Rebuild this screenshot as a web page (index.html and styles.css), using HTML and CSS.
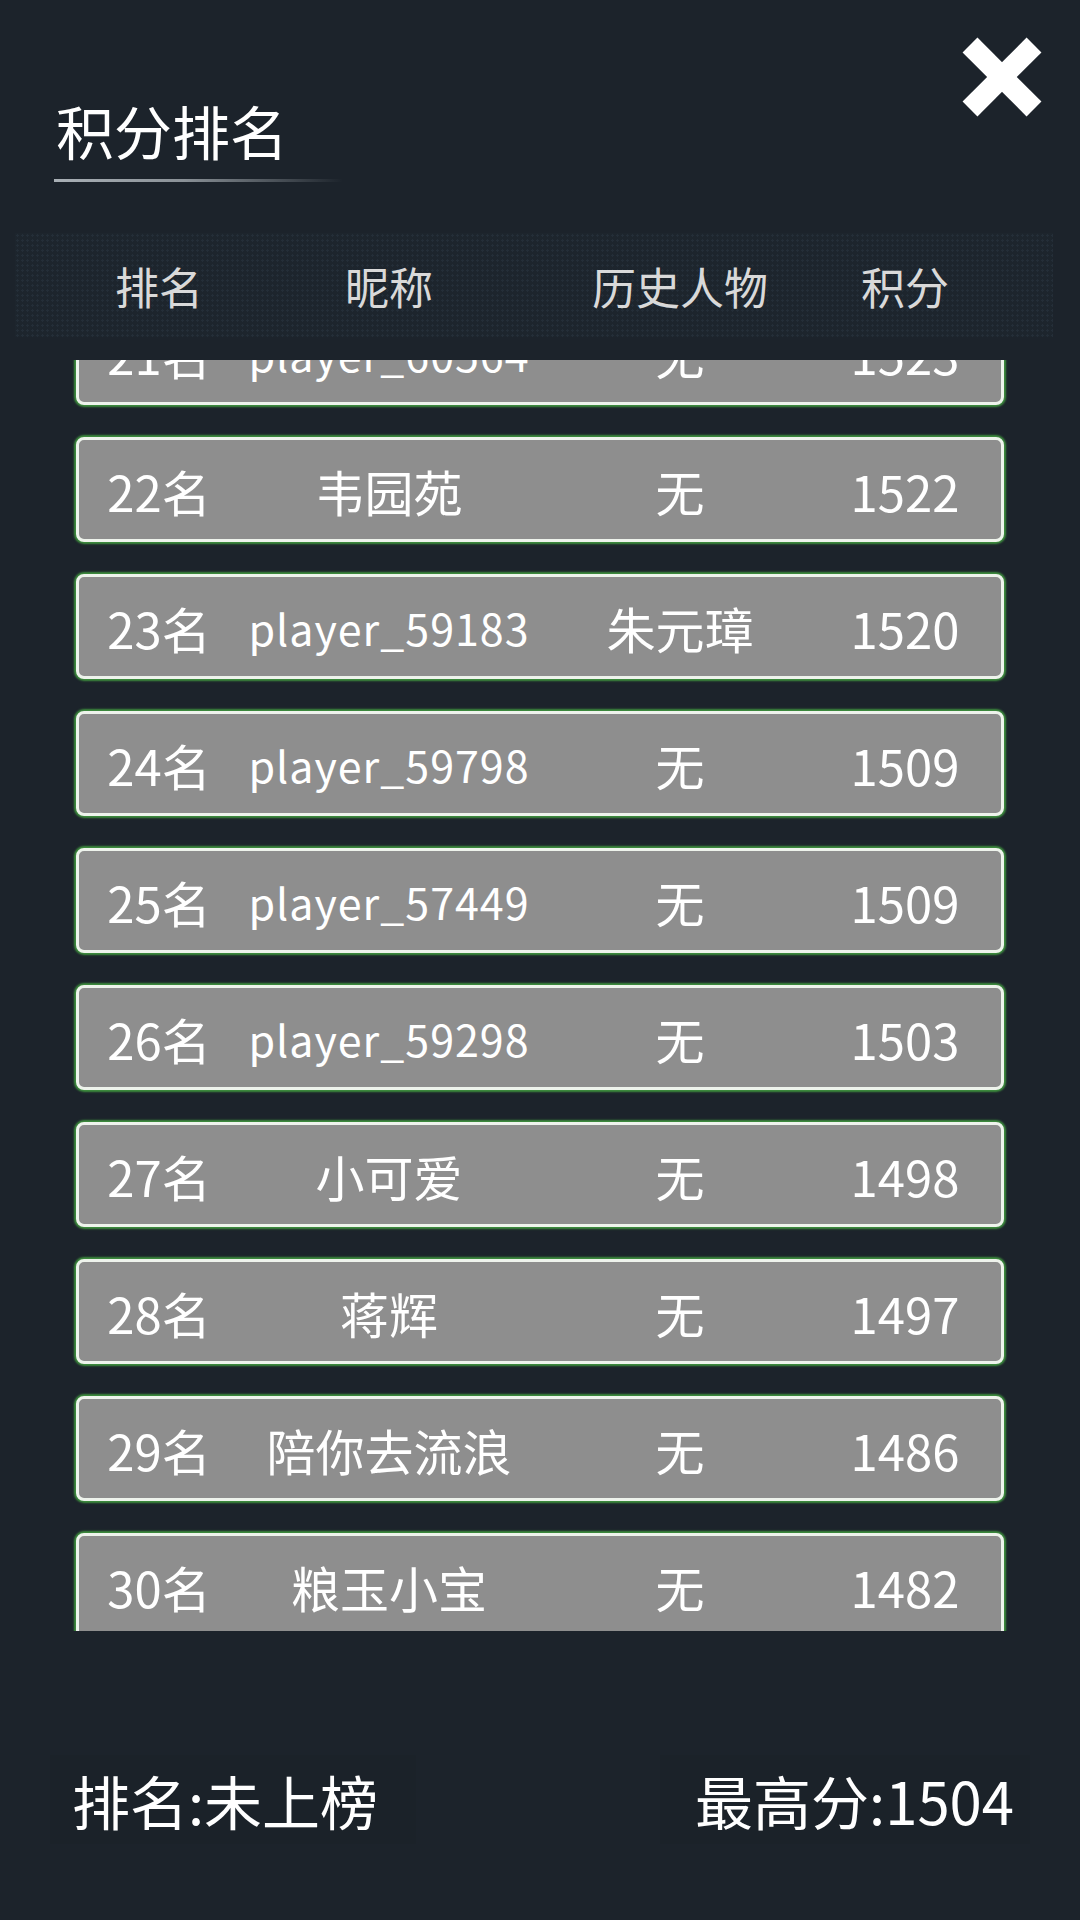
FILE: index.html
```html
<!DOCTYPE html>
<html lang="zh-CN">
<head>
<meta charset="utf-8">
<title>积分排名</title>
<link rel="stylesheet" href="styles.css">
</head>
<body>
<div class="page">
  <div class="top">
    <div class="title-wrap">
      <div class="title">积分排名</div>
      <div class="underline"></div>
    </div>
    <div class="close">
      <svg width="84" height="84" viewBox="0 0 84 84">
        <line x1="10" y1="10" x2="74" y2="74" stroke="#ffffff" stroke-width="21"/>
        <line x1="74" y1="10" x2="10" y2="74" stroke="#ffffff" stroke-width="21"/>
      </svg>
    </div>
  </div>

  <div class="header">
    <div class="hcell">排名</div>
    <div class="hcell">昵称</div>
    <div class="hcell">历史人物</div>
    <div class="hcell">积分</div>
  </div>

  <div class="list-wrap">
    <div class="list">
      <div class="row"><span>21名</span><span class="nick">player_60564</span><span>无</span><span>1523</span></div>
      <div class="row"><span>22名</span><span>韦园苑</span><span>无</span><span>1522</span></div>
      <div class="row"><span>23名</span><span class="nick">player_59183</span><span>朱元璋</span><span>1520</span></div>
      <div class="row"><span>24名</span><span class="nick">player_59798</span><span>无</span><span>1509</span></div>
      <div class="row"><span>25名</span><span class="nick">player_57449</span><span>无</span><span>1509</span></div>
      <div class="row"><span>26名</span><span class="nick">player_59298</span><span>无</span><span>1503</span></div>
      <div class="row"><span>27名</span><span>小可爱</span><span>无</span><span>1498</span></div>
      <div class="row"><span>28名</span><span>蒋辉</span><span>无</span><span>1497</span></div>
      <div class="row"><span>29名</span><span>陪你去流浪</span><span>无</span><span>1486</span></div>
      <div class="row"><span>30名</span><span>粮玉小宝</span><span>无</span><span>1482</span></div>
    </div>
  </div>

  <div class="footer">
    <div class="fbox left">排名:未上榜</div>
    <div class="fbox right">最高分:1504</div>
  </div>
</div>
</body>
</html>
```

FILE: styles.css
```css
html, body {
  margin: 0;
  padding: 0;
}
body {
  width: 1080px;
  height: 1920px;
  background: #1c232b;
  color: #ffffff;
  font-family: "Noto Sans CJK SC", "Noto Sans", sans-serif;
  overflow: hidden;
}
.page {
  width: 1080px;
  height: 1920px;
  display: flex;
  flex-direction: column;
}
.top {
  height: 233px;
  display: flex;
  justify-content: space-between;
  align-items: flex-start;
  padding: 0 36px 0 54px;
}
.title-wrap {
  margin-top: 95px;
}
.title {
  font-size: 58px;
  line-height: 70px;
  padding-left: 2px;
  color: #ffffff;
}
.underline {
  margin-top: 14px;
  width: 289px;
  height: 3px;
  background: linear-gradient(to right, #a9b0b6 0%, #8a9197 45%, rgba(138,145,151,0) 100%);
}
.close {
  margin-top: 35px;
  width: 84px;
  height: 84px;
}
.close svg {
  display: block;
}
.header {
  height: 104px;
  margin: 0 27px 0 15px;
  padding-left: 29px;
  display: grid;
  grid-template-columns: 230px 230px 352px 98px;
  align-items: center;
  background-color: #1d252d;
  background-image: radial-gradient(circle, #242e38 1px, transparent 1.3px);
  background-size: 5px 5px;
  color: #d9d9d9;
  font-size: 44px;
}
.hcell {
  text-align: center;
  line-height: 1;
  padding-top: 2px;
}
.list-wrap {
  margin: 23px 0 0 70px;
  width: 940px;
  height: 1271px;
  overflow: hidden;
}
.list {
  margin-top: -60px;
  padding: 0 6px;
  display: flex;
  flex-direction: column;
  gap: 32px;
}
.row {
  box-sizing: border-box;
  width: 928px;
  height: 105px;
  flex: 0 0 auto;
  background: #8e8e8e;
  border: 3px solid #eef3ec;
  border-radius: 8px;
  box-shadow: 0 0 2px 2px #3e8f3e;
  display: grid;
  grid-template-columns: 160px 300px 282px 168px;
  align-items: center;
  font-size: 49px;
  line-height: 1;
  color: #ffffff;
}
.row span {
  text-align: center;
  white-space: nowrap;
  padding-top: 1px;
}
.row .nick {
  font-size: 43px;
  letter-spacing: 1px;
}
.footer {
  margin-top: 124px;
  display: flex;
  justify-content: space-between;
  padding: 0 50px 0 50px;
}
.fbox {
  height: 89px;
  display: flex;
  align-items: center;
  font-size: 58px;
  line-height: 1;
  background: #1b2229;
}
.fbox.left {
  width: 366px;
  padding-left: 22px;
  box-sizing: border-box;
}
.fbox.right {
  width: 370px;
  justify-content: flex-end;
  padding-right: 16px;
  box-sizing: border-box;
}
```
